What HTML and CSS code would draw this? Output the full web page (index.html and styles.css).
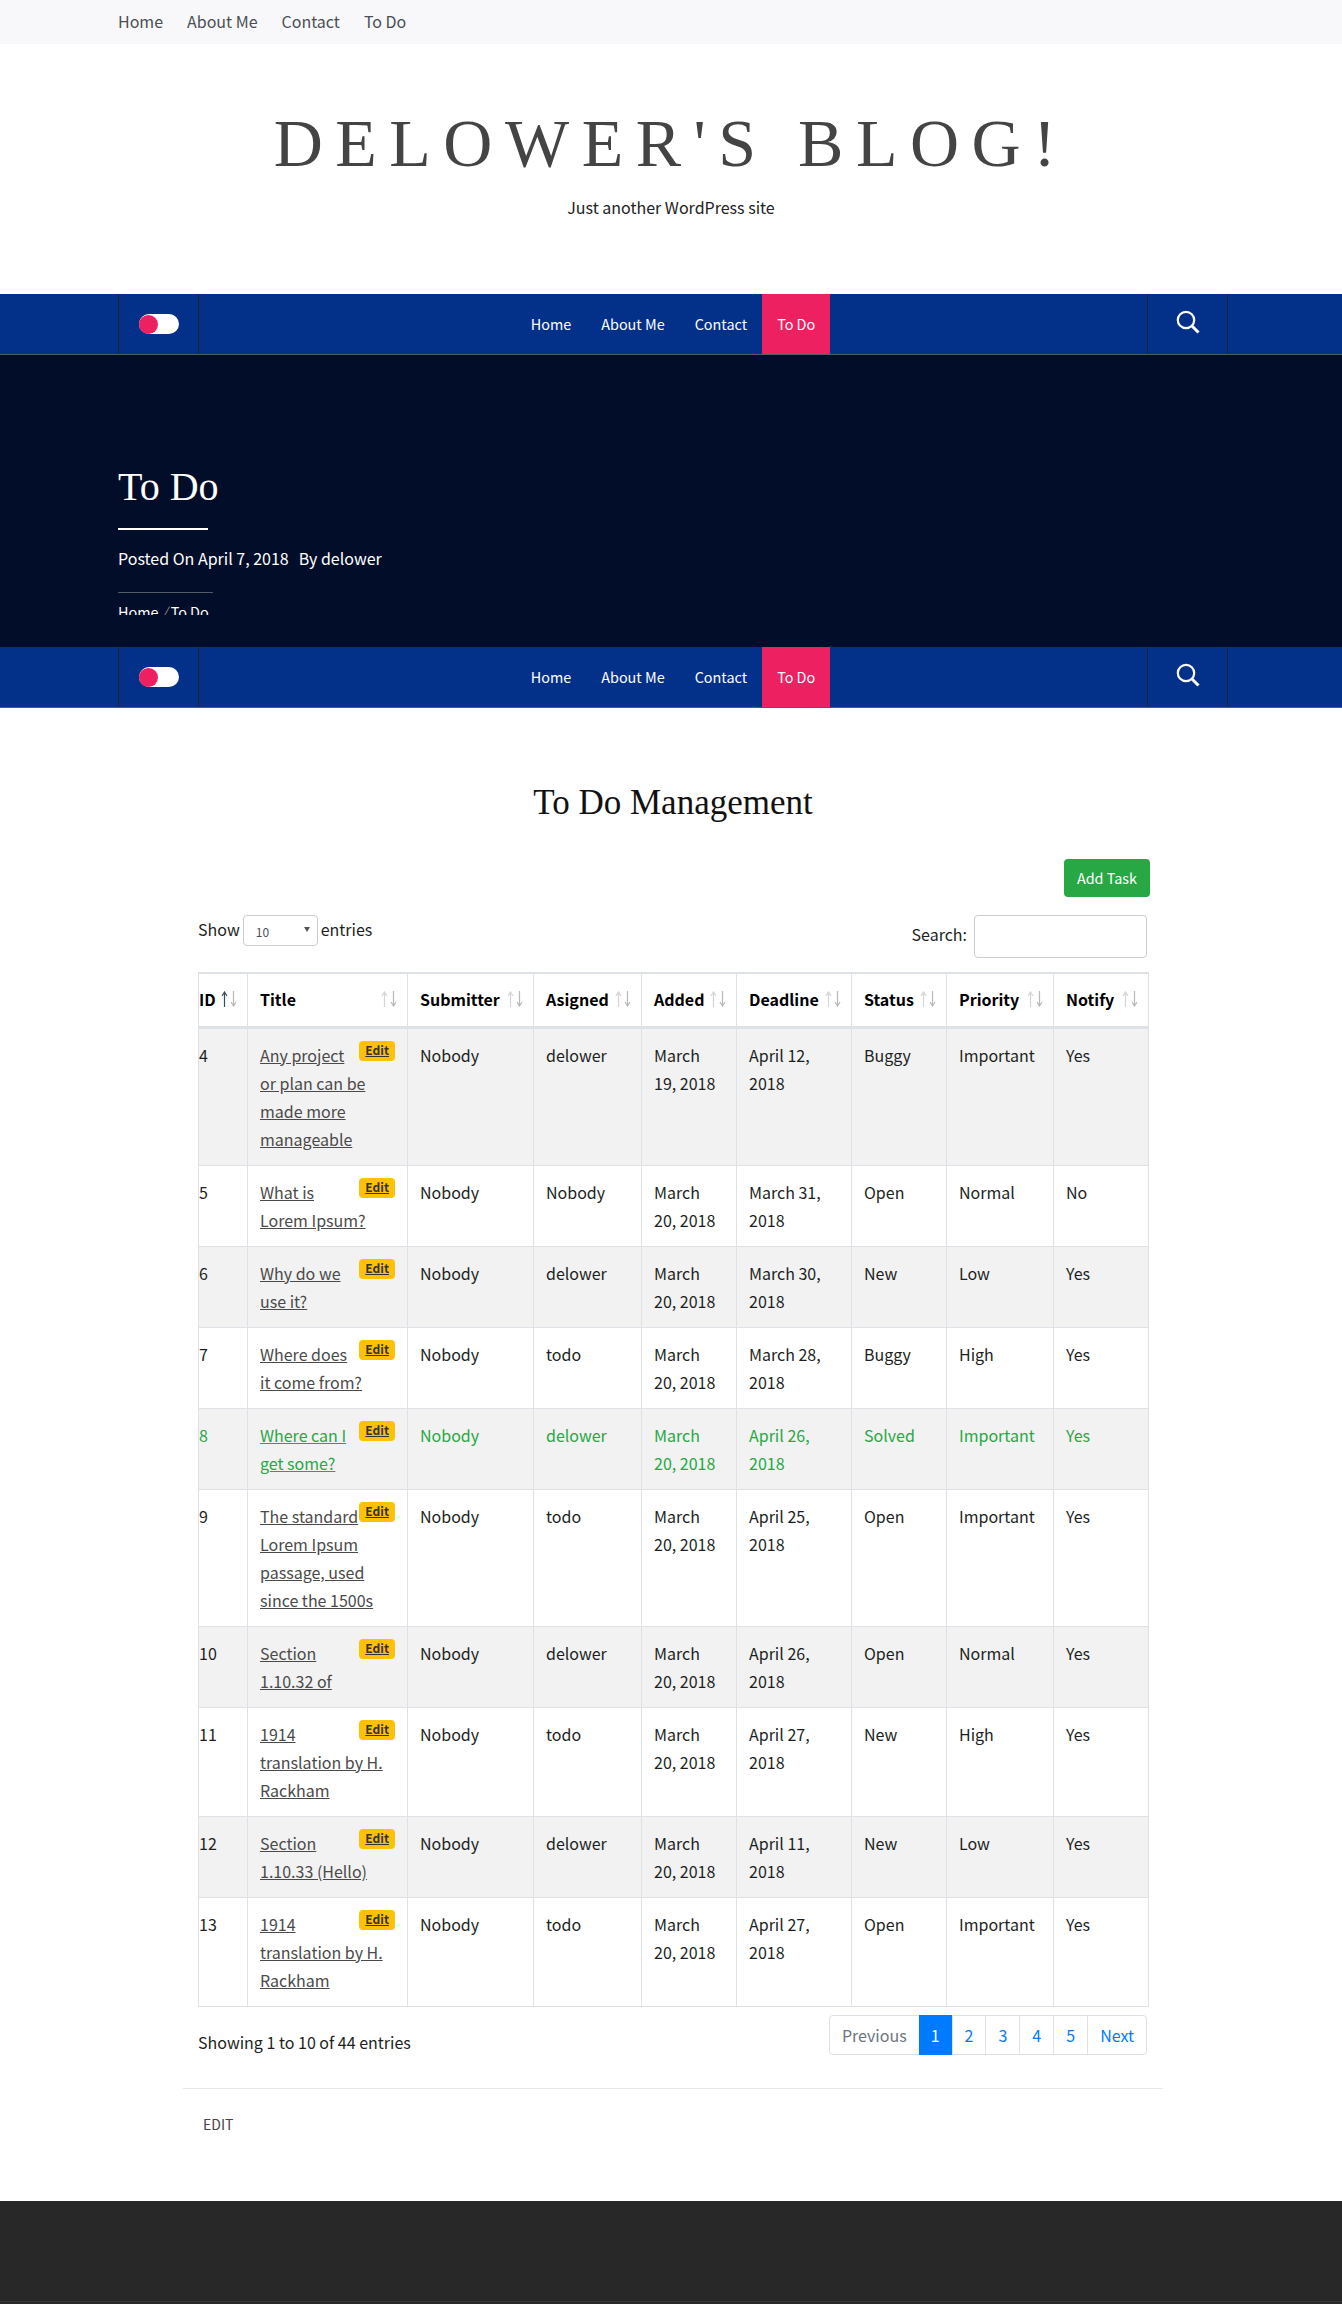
FILE: index.html
```html
<!DOCTYPE html>
<html lang="en">
  <head>
    <meta charset="UTF-8" />
    <meta name="viewport" content="width=device-width, initial-scale=1.0" />
    <title>To Do – Delower's Blog!</title>
    <link rel="stylesheet" href="styles.css">
  </head>
  <body>
    <svg class="defs" width="0" height="0">
      <symbol id="arrow-up" viewBox="0 0 7 16"><path d="M3.5 16V2M1 5l2.5-4L6 5" fill="none" stroke="currentColor" stroke-width="1.2" /></symbol>
      <symbol id="arrow-down" viewBox="0 0 7 16"><path d="M3.5 0v14M1 11l2.5 4L6 11" fill="none" stroke="currentColor" stroke-width="1.2" /></symbol>
      <symbol id="search" viewBox="0 0 24 24"><circle cx="10" cy="10" r="8.2" fill="none" stroke="currentColor" stroke-width="2.2" /><path d="M16 16l6.5 6.5" fill="none" stroke="currentColor" stroke-width="3" /></symbol>
    </svg>

    <div class="top-bar">
      <ul class="top-menu">
        <li><a href="#">Home</a></li>
        <li><a href="#">About Me</a></li>
        <li><a href="#">Contact</a></li>
        <li><a href="#">To Do</a></li>
      </ul>
    </div>

    <header class="branding">
      <h1 class="site-title">Delower's Blog!</h1>
      <p class="site-desc">Just another WordPress site</p>
    </header>

    <nav class="main-nav">
      <div class="nav-inner">
        <div class="nav-cell"><span class="toggle"><span class="toggle-dot"></span></span></div>
        <ul class="nav-menu">
          <li><a href="#">Home</a></li>
          <li><a href="#">About Me</a></li>
          <li><a href="#">Contact</a></li>
          <li class="current"><a href="#">To Do</a></li>
        </ul>
        <div class="nav-cell nav-search"><svg class="search-icon"><use href="#search" /></svg></div>
      </div>
    </nav>

    <section class="hero">
      <div class="hero-inner">
        <h2 class="page-title">To Do</h2>
        <p class="page-meta"><span>Posted On April 7, 2018</span><span>By delower</span></p>
        <div class="crumbs"><a href="#">Home</a> <i>/</i> <a href="#">To Do</a></div>
      </div>
    </section>

    <nav class="main-nav no-line">
      <div class="nav-inner">
        <div class="nav-cell"><span class="toggle"><span class="toggle-dot"></span></span></div>
        <ul class="nav-menu">
          <li><a href="#">Home</a></li>
          <li><a href="#">About Me</a></li>
          <li><a href="#">Contact</a></li>
          <li class="current"><a href="#">To Do</a></li>
        </ul>
        <div class="nav-cell nav-search"><svg class="search-icon"><use href="#search" /></svg></div>
      </div>
    </nav>

    <main class="content">
      <h2 class="todo-title">To Do Management</h2>
      <div class="todo-actions"><a class="btn-add" href="#">Add Task</a></div>

      <div class="table-tools">
        <label class="show-entries">Show <span class="fake-select">10<i></i></span> entries</label>
        <label class="table-search">Search: <input type="text" /></label>
      </div>

      <table class="todo-table">
        <colgroup>
          <col class="c-id" /><col class="c-title" /><col class="c-sub" /><col class="c-asg" /><col class="c-add" />
          <col class="c-dead" /><col class="c-status" /><col class="c-prio" /><col class="c-notify" />
        </colgroup>
        <thead>
          <tr>
            <th class="cell-id">ID<span class="sort asc"><svg><use href="#arrow-up" /></svg><svg><use href="#arrow-down" /></svg></span></th>
            <th>Title<span class="sort"><svg><use href="#arrow-up" /></svg><svg><use href="#arrow-down" /></svg></span></th>
            <th>Submitter<span class="sort"><svg><use href="#arrow-up" /></svg><svg><use href="#arrow-down" /></svg></span></th>
            <th>Asigned<span class="sort"><svg><use href="#arrow-up" /></svg><svg><use href="#arrow-down" /></svg></span></th>
            <th>Added<span class="sort"><svg><use href="#arrow-up" /></svg><svg><use href="#arrow-down" /></svg></span></th>
            <th>Deadline<span class="sort"><svg><use href="#arrow-up" /></svg><svg><use href="#arrow-down" /></svg></span></th>
            <th>Status<span class="sort"><svg><use href="#arrow-up" /></svg><svg><use href="#arrow-down" /></svg></span></th>
            <th>Priority<span class="sort"><svg><use href="#arrow-up" /></svg><svg><use href="#arrow-down" /></svg></span></th>
            <th>Notify<span class="sort"><svg><use href="#arrow-up" /></svg><svg><use href="#arrow-down" /></svg></span></th>
          </tr>
        </thead>
        <tbody>
          <tr>
            <td class="cell-id">4</td>
            <td><a class="edit" href="#">Edit</a><a href="#">Any project or plan can be made more manageable</a></td>
            <td>Nobody</td><td>delower</td><td>March 19, 2018</td><td>April 12, 2018</td><td>Buggy</td><td>Important</td><td>Yes</td>
          </tr>
          <tr>
            <td class="cell-id">5</td>
            <td><a class="edit" href="#">Edit</a><a href="#">What is Lorem Ipsum?</a></td>
            <td>Nobody</td><td>Nobody</td><td>March 20, 2018</td><td>March 31, 2018</td><td>Open</td><td>Normal</td><td>No</td>
          </tr>
          <tr>
            <td class="cell-id">6</td>
            <td><a class="edit" href="#">Edit</a><a href="#">Why do we use it?</a></td>
            <td>Nobody</td><td>delower</td><td>March 20, 2018</td><td>March 30, 2018</td><td>New</td><td>Low</td><td>Yes</td>
          </tr>
          <tr>
            <td class="cell-id">7</td>
            <td><a class="edit" href="#">Edit</a><a href="#">Where does it come from?</a></td>
            <td>Nobody</td><td>todo</td><td>March 20, 2018</td><td>March 28, 2018</td><td>Buggy</td><td>High</td><td>Yes</td>
          </tr>
          <tr class="solved">
            <td class="cell-id">8</td>
            <td><a class="edit" href="#">Edit</a><a href="#">Where can I get some?</a></td>
            <td>Nobody</td><td>delower</td><td>March 20, 2018</td><td>April 26, 2018</td><td>Solved</td><td>Important</td><td>Yes</td>
          </tr>
          <tr>
            <td class="cell-id">9</td>
            <td><a class="edit" href="#">Edit</a><a href="#">The standard Lorem Ipsum passage, used since the 1500s</a></td>
            <td>Nobody</td><td>todo</td><td>March 20, 2018</td><td>April 25, 2018</td><td>Open</td><td>Important</td><td>Yes</td>
          </tr>
          <tr>
            <td class="cell-id">10</td>
            <td><a class="edit" href="#">Edit</a><a href="#">Section 1.10.32 of</a></td>
            <td>Nobody</td><td>delower</td><td>March 20, 2018</td><td>April 26, 2018</td><td>Open</td><td>Normal</td><td>Yes</td>
          </tr>
          <tr>
            <td class="cell-id">11</td>
            <td><a class="edit" href="#">Edit</a><a href="#">1914 translation by H. Rackham</a></td>
            <td>Nobody</td><td>todo</td><td>March 20, 2018</td><td>April 27, 2018</td><td>New</td><td>High</td><td>Yes</td>
          </tr>
          <tr>
            <td class="cell-id">12</td>
            <td><a class="edit" href="#">Edit</a><a href="#">Section 1.10.33 (Hello)</a></td>
            <td>Nobody</td><td>delower</td><td>March 20, 2018</td><td>April 11, 2018</td><td>New</td><td>Low</td><td>Yes</td>
          </tr>
          <tr>
            <td class="cell-id">13</td>
            <td><a class="edit" href="#">Edit</a><a href="#">1914 translation by H. Rackham</a></td>
            <td>Nobody</td><td>todo</td><td>March 20, 2018</td><td>April 27, 2018</td><td>Open</td><td>Important</td><td>Yes</td>
          </tr>
        </tbody>
      </table>

      <div class="table-foot">
        <div class="table-info">Showing 1 to 10 of 44 entries</div>
        <ul class="pager">
          <li class="off"><a href="#">Previous</a></li>
          <li class="on"><a href="#">1</a></li>
          <li><a href="#">2</a></li>
          <li><a href="#">3</a></li>
          <li><a href="#">4</a></li>
          <li><a href="#">5</a></li>
          <li><a href="#">Next</a></li>
        </ul>
      </div>

      <div class="entry-foot"><a href="#">Edit</a></div>
    </main>

    <footer class="site-foot">
      <div class="foot-bottom"></div>
    </footer>
  </body>
</html>
```

FILE: styles.css
```css
body {
  font-family: "Noto Sans CJK SC", "Noto Sans", sans-serif;
  font-size: 16px;
  line-height: 28px;
  color: #1c1f23;
  background-color: #fff;
  margin: 0;
  padding: 0;
}

a {
  color: inherit;
}

ul {
  list-style: none;
  margin: 0;
  padding: 0;
}

.defs {
  position: absolute;
}

/* top bar */
.top-bar {
  height: 44px;
  padding-left: 118px;
  background-color: #f8f8fa;
}

.top-menu {
  display: flex;
  gap: 24px;
  line-height: 43px;
}

.top-menu a {
  color: #4a4f55;
  text-decoration: none;
}

/* branding */
.branding {
  height: 250px;
  padding-top: 60px;
  box-sizing: border-box;
  text-align: center;
}

.site-title {
  margin: 0;
  font-family: "Liberation Serif", serif;
  font-size: 68px;
  font-weight: 400;
  line-height: 78px;
  letter-spacing: 12.5px;
  text-transform: uppercase;
  color: #444;
}

.site-desc {
  margin: 11px 0 0;
  color: #222;
}

/* main nav */
.main-nav {
  height: 61px;
  background-color: #03318a;
  border-bottom: 1px solid #555b66;
  box-sizing: border-box;
}

.nav-inner {
  display: flex;
  height: 60px;
  margin: 0 114px 0 118px;
}

.nav-cell {
  display: flex;
  align-items: center;
  justify-content: center;
  width: 81px;
  border-left: 1px solid #1a2233;
  border-right: 1px solid #1a2233;
  box-sizing: border-box;
}

.toggle {
  display: block;
  width: 40px;
  height: 20px;
  border-radius: 10px;
  background-color: #fff;
}

.toggle-dot {
  display: block;
  width: 19px;
  height: 19px;
  margin: 0.5px 0 0 0.5px;
  border-radius: 50%;
  background-color: #ed2061;
}

.nav-menu {
  display: flex;
  flex: 1;
  justify-content: center;
}

.nav-menu a {
  display: block;
  padding: 0 15px;
  font-size: 14.4px;
  line-height: 60px;
  color: #fff;
  text-decoration: none;
}

.nav-menu .current a {
  background-color: #ed2061;
}

.search-icon {
  width: 24px;
  height: 24px;
  margin-bottom: 4px;
  color: #fff;
}

/* page header */
.hero {
  height: 292px;
  padding: 109px 0 0 118px;
  box-sizing: border-box;
  background-color: #010d29;
  color: #fff;
}

.hero-inner {
  height: 151px;
  overflow: hidden;
}

.page-title {
  margin: 0;
  padding-bottom: 18px;
  width: 90px;
  border-bottom: 2px solid #fff;
  font-family: "Liberation Serif", serif;
  font-size: 40px;
  font-weight: 400;
  line-height: 46px;
  white-space: nowrap;
}

.page-meta {
  margin: 14px 0 0;
  display: flex;
  gap: 10px;
}

.crumbs {
  margin-top: 20px;
  padding-top: 5px;
  width: 95px;
  border-top: 1px solid #555b66;
  font-size: 14.4px;
  white-space: nowrap;
}

.crumbs a {
  text-decoration: none;
}

.crumbs i {
  color: #888;
}

/* content */
.content {
  width: 980px;
  margin-left: 183px;
  height: 1493px;
  box-sizing: border-box;
}

.todo-title {
  margin: 0;
  padding-top: 74px;
  font-family: "Liberation Serif", serif;
  font-size: 35px;
  font-weight: 400;
  line-height: 42px;
  text-align: center;
  color: #111;
}

.todo-actions {
  display: flex;
  justify-content: flex-end;
  margin-top: 35px;
  padding-right: 13px;
}

.btn-add {
  padding: 5px 13px;
  border-radius: 4px;
  background-color: #28a745;
  color: #fff;
  font-size: 14.4px;
  text-decoration: none;
}

.table-tools {
  display: flex;
  justify-content: space-between;
  margin: 18px 16px 0 15px;
  height: 57px;
}

.show-entries {
  display: flex;
  align-items: flex-start;
  gap: 3px;
}

.fake-select {
  position: relative;
  width: 75px;
  height: 31px;
  padding-left: 12px;
  border: 1px solid #ccc;
  border-radius: 4px;
  box-sizing: border-box;
  font-size: 12px;
  line-height: 31px;
  color: #495057;
}

.fake-select i {
  position: absolute;
  top: 11px;
  right: 7px;
  border-left: 3px solid transparent;
  border-right: 3px solid transparent;
  border-top: 5px solid #555;
}

.table-search {
  display: flex;
  align-items: flex-start;
  gap: 7px;
  line-height: 38px;
}

.table-search input {
  width: 173px;
  height: 43px;
  padding: 0 8px;
  border: 1px solid #ccc;
  border-radius: 4px;
  box-sizing: border-box;
}

/* table */
.todo-table {
  width: 950px;
  margin-left: 15px;
  table-layout: fixed;
  border-collapse: collapse;
  border: 1px solid #dee2e6;
}

.c-id { width: 49px; }
.c-title { width: 160px; }
.c-sub { width: 126px; }
.c-asg { width: 108px; }
.c-add { width: 95px; }
.c-dead { width: 115px; }
.c-status { width: 95px; }
.c-prio { width: 107px; }
.c-notify { width: 95px; }

.todo-table th,
.todo-table td {
  padding: 12px;
  border: 1px solid #dee2e6;
  vertical-align: top;
  text-align: left;
}

.todo-table th {
  position: relative;
  height: 54px;
  padding-top: 11px;
  padding-bottom: 12px;
  border-top-width: 2px;
  border-bottom-width: 3px;
  box-sizing: border-box;
  color: #000;
  font-weight: 700;
  white-space: nowrap;
}

.todo-table .cell-id {
  padding-left: 0;
  padding-right: 0;
}

.todo-table tbody tr:nth-child(odd) {
  background-color: #f2f2f2;
}

.todo-table td a {
  color: #4a4a4a;
}

.todo-table .solved td,
.todo-table .solved td a {
  color: #28a745;
}

.todo-table td .edit,
.todo-table .solved td .edit {
  float: right;
  height: 20px;
  padding: 0 6px;
  border-radius: 4px;
  background-color: #ffc107;
  color: #333;
  font-size: 12px;
  font-weight: 700;
  line-height: 18px;
}

.sort {
  position: absolute;
  top: 17px;
  right: 10px;
  display: flex;
  gap: 2px;
  color: #d4d4d4;
}

.sort svg {
  display: block;
  width: 7px;
  height: 16px;
}

.sort svg + svg {
  color: #b8b8b8;
}

.sort.asc svg:first-child {
  color: #3c4a58;
}

/* under the table */
.table-foot {
  display: flex;
  justify-content: space-between;
  margin: 8px 16px 0 15px;
}

.table-info {
  padding-top: 13px;
}

.pager {
  display: flex;
  height: 40px;
  border: 1px solid #dee2e6;
  border-radius: 4px;
  box-sizing: border-box;
}

.pager li + li {
  border-left: 1px solid #dee2e6;
}

.pager a {
  display: block;
  padding: 0 12px;
  font-size: 16px;
  line-height: 38px;
  color: #007bff;
  text-decoration: none;
}

.pager .off a {
  color: #6c757d;
}

.pager .on {
  margin: -1px 0;
  border-left: 0;
}

.pager .on a {
  line-height: 40px;
  background-color: #007bff;
  color: #fff;
}

.entry-foot {
  margin-top: 32px;
  padding: 21px 20px 0;
  border-top: 1px solid #e8e8e8;
  font-size: 14px;
}

.entry-foot a {
  color: #444;
  text-transform: uppercase;
  text-decoration: none;
}

.site-foot {
  height: 103px;
  padding-top: 100px;
  box-sizing: border-box;
  background-color: #282828;
}

.foot-bottom {
  border-top: 1px solid #363636;
}
```
